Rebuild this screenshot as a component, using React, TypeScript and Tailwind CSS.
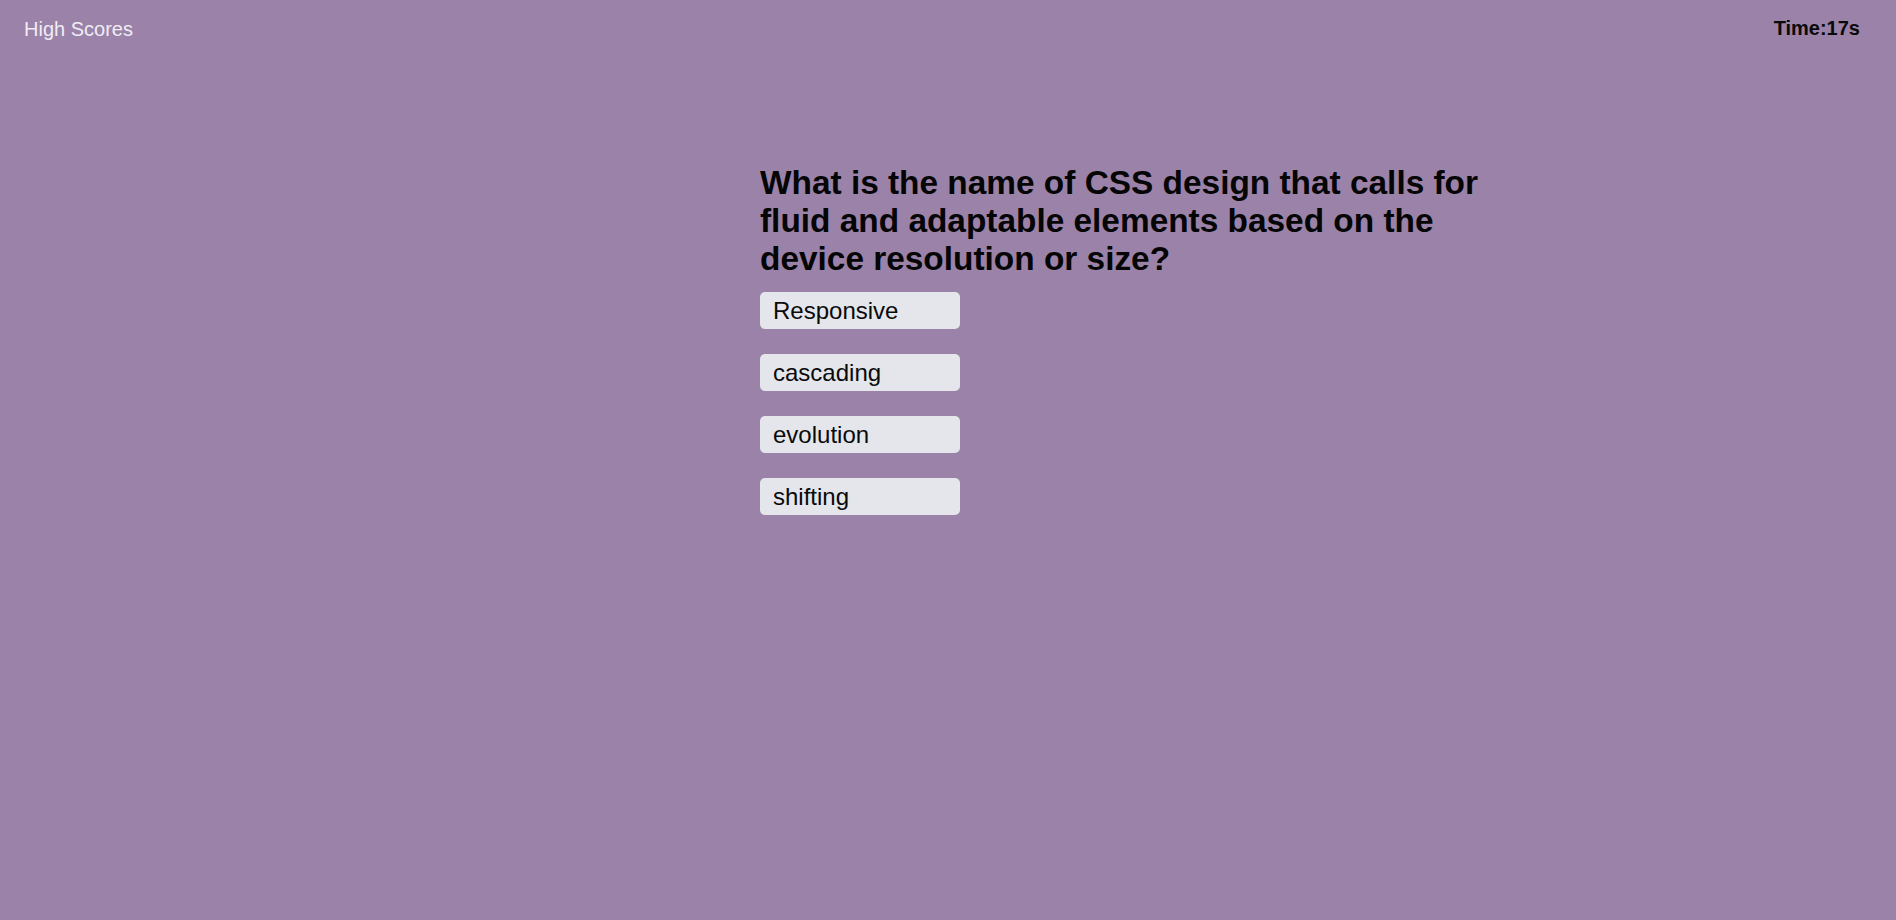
const answers = ["Responsive", "cascading", "evolution", "shifting"];

export default function App() {
  return (
    <div className="min-h-[920px] w-full bg-[#9a82a9] font-['Liberation_Sans',Arial,sans-serif]">
      <header className="flex items-start justify-between pl-6 pr-9 pt-[18px]">
        <a href="#" className="text-[20px] leading-[23px] text-[#f0ecf4]">
          High Scores
        </a>
        <div className="-mt-[1px] text-[20px] font-bold leading-[23px] text-[#0a0a0a]">Time:17s</div>
      </header>

      <main className="ml-[760px] w-[740px] pt-[123px]">
        <h2 className="text-[33.4px] font-bold leading-[38px] text-[#050505]">
          What is the name of CSS design that calls for fluid and adaptable elements based on the
          device resolution or size?
        </h2>
        <div className="mt-[14px] flex flex-col gap-[25px]">
          {answers.map((a) => (
            <button
              key={a}
              className="w-[200px] rounded-[5px] bg-[#e4e6ec] px-[13px] py-[5px] text-left text-[24px] leading-[27px] text-[#0a0a0a]"
            >
              {a}
            </button>
          ))}
        </div>
      </main>
    </div>
  );
}
